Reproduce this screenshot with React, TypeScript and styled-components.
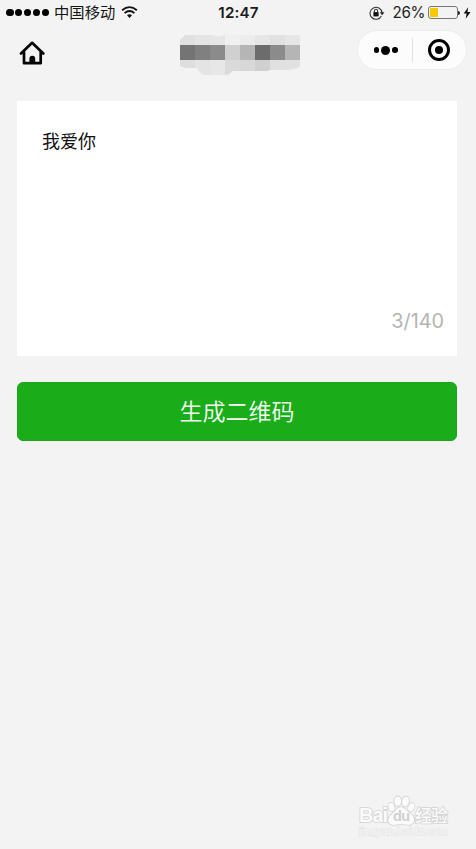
import React from 'react';
import styled, { createGlobalStyle } from 'styled-components';

const GlobalStyle = createGlobalStyle`
  *, *::before, *::after { box-sizing: border-box; }
  body {
    margin: 0;
    background: #f3f3f3;
    color: #000;
    font-family: Inter, "Noto Sans CJK SC", sans-serif;
  }
  svg { display: block; }
`;

const Screen = styled.div`
  display: flex;
  flex-direction: column;
  width: 476px;
  height: 849px;
  overflow: hidden;
  background: #f3f3f3;
`;

const StatusBar = styled.header`
  display: grid;
  grid-template-columns: 1fr 44px 1fr;
  align-items: center;
  height: 25px;
  padding: 0 5px 0 6px;
  font-size: 15px;
  line-height: 24px;
`;

const StatusGroup = styled.div<{ $end?: boolean }>`
  display: flex;
  align-items: center;
  justify-content: ${p => (p.$end ? 'flex-end' : 'flex-start')};
`;

const Signal = styled.div`
  display: flex;
  gap: 1.4px;
  margin-right: 5px;
`;

const Dot = styled.span<{ $size: number }>`
  width: ${p => p.$size}px;
  height: ${p => p.$size}px;
  border-radius: 50%;
  background: #000;
`;

const Carrier = styled.span`
  margin-right: 6px;
  padding-bottom: 3px;
  font-family: "Noto Sans CJK SC", sans-serif;
  font-size: 15.3px;
  line-height: 22px;
  color: #151515;
`;

const Time = styled.span`
  text-align: center;
  font-size: 15.2px;
  font-weight: 600;
  letter-spacing: 0.15px;
  white-space: nowrap;
  color: #1a1a1a;
`;

const Percent = styled.span`
  margin: 0 3px 0 8px;
  font-size: 15.2px;
  letter-spacing: -0.4px;
  color: #222;
`;

const Battery = styled.div`
  width: 30px;
  height: 13px;
  padding: 1px;
  border: 1px solid #777;
  border-radius: 3px;
`;

const Charge = styled.div`
  width: 7.5px;
  height: 9px;
  border-radius: 1px 0 0 1px;
  background: #fdc800;
`;

const BatteryTip = styled.span`
  width: 2px;
  height: 4px;
  margin-right: 3px;
  border-radius: 0 2px 2px 0;
  background: #222;
`;

const NavBar = styled.nav`
  display: grid;
  grid-template-columns: 1fr 120px 1fr;
  align-items: start;
  height: 76px;
  padding: 5px 9px 0 13px;
`;

const HomeButton = styled.button`
  width: 38px;
  height: 38px;
  margin-top: 4px;
  padding: 6px;
  border: 0;
  background: none;
`;

const TitleMosaic = styled.div`
  margin-top: 5px;
`;

const Capsule = styled.div`
  display: grid;
  grid-template-columns: 1fr 1px 1fr;
  align-items: center;
  justify-items: center;
  justify-self: end;
  width: 110px;
  height: 40px;
  border: 1px solid #ececec;
  border-radius: 20px;
  background: #fcfcfc;
`;

const More = styled.div`
  display: flex;
  align-items: center;
  gap: 2px;
  margin-left: 2px;
`;

const Divider = styled.span`
  width: 1px;
  height: 24px;
  background: #e1e1e1;
`;

const Target = styled.div`
  display: grid;
  place-items: center;
  width: 22px;
  height: 22px;
  border: 3px solid #000;
  border-radius: 50%;
`;

const Content = styled.main`
  display: flex;
  flex-direction: column;
  gap: 26px;
  padding: 0 19px 0 17px;
`;

const Editor = styled.section`
  display: flex;
  flex-direction: column;
  justify-content: space-between;
  height: 255px;
  padding: 26px 13px 21px 25px;
  background: #fff;
`;

const Message = styled.p`
  margin: 0;
  font-family: "Noto Sans CJK SC", sans-serif;
  font-size: 18px;
  line-height: 27px;
  color: #111;
`;

const Counter = styled.span`
  align-self: flex-end;
  font-size: 19.8px;
  line-height: 28px;
  color: #b4b4b4;
`;

const GenerateButton = styled.button`
  height: 59px;
  padding: 0 0 4px;
  border: 1px solid #1ca61b;
  border-radius: 6px;
  background: #1aad19;
  color: #f6fff6;
  font: 350 23px "Noto Sans CJK SC", sans-serif;
`;

const Watermark = styled.footer`
  align-self: flex-end;
  width: 94px;
  height: 47px;
  margin: auto 24px 10px 0;
`;

const mosaicRows = [
  { y: 0, h: 10, shades: ['#e0e0e0', '#e4e4e4', '#e6e6e6', '#f0f0f0', '#ececec', '#e6e6e6', '#e1e1e1', '#e6e6e6'] },
  { y: 10, h: 15, shades: ['#747474', '#808080', '#8b8b8b', '#d0d0d0', '#b5b5b5', '#6c6c6c', '#8b8b8b', '#b5b5b5'] },
  { y: 25, h: 15, shades: ['#dedede', '#e4e4e4', '#e7e7e7', '#dadada', '#d8d8d8', '#d0d0d0', '#e0e0e0', '#e1e1e1'] },
];

function Mosaic() {
  return (
    <svg width="120" height="40" viewBox="0 0 120 40" aria-hidden="true">
      <defs>
        <clipPath id="smudge">
          <path d="M0 5 5 0Q9-2 14 0H32Q38 3 44 0H120V31Q118 34 112 34L109 35H90L87 36H53L49 39 45 40H23Q18 36 17 33H5L0 31Z" />
        </clipPath>
      </defs>
      <g clipPath="url(#smudge)" shapeRendering="crispEdges">
        {mosaicRows.map(row => row.shades.map((shade, i) => (
          <rect key={`${row.y}-${i}`} x={i * 15} y={row.y} width="15" height={row.h} fill={shade} />
        )))}
      </g>
    </svg>
  );
}

function WifiIcon() {
  return (
    <svg width="17" height="13" viewBox="0 0 17 13" fill="none" stroke="#111" strokeWidth="1.8">
      <path d="M1.1 4.2Q8.5-1.9 15.9 4.2M3.6 7.2Q8.5 2.8 13.4 7.2" />
      <path d="M6 9.3Q8.5 7.3 11 9.3L8.5 12Z" fill="#111" stroke="none" />
    </svg>
  );
}

function RotationLockIcon() {
  return (
    <svg width="16" height="14" viewBox="0 0 16 14" fill="none" stroke="#333" strokeWidth="1.1">
      <path d="M12.4 10A6 6 0 1 1 13 6.6" />
      <path d="m10.7 6.2 4.8 0-2.4 3Z" fill="#222" stroke="none" />
      <rect x="4.4" y="6.1" width="5.2" height="4.3" fill="#111" stroke="none" />
      <path d="M5.4 6.3V4.9a1.6 1.6 0 0 1 3.2 0v1.4" />
    </svg>
  );
}

function HomeIcon() {
  return (
    <svg width="26" height="26" viewBox="0 0 26 26" fill="none" stroke="#050505" strokeWidth="2.7" strokeLinecap="round" strokeLinejoin="round">
      <path d="M2 13.5 13.1 2.8 24.3 13.5M5 12V23.2H21.7V12" />
      <path d="M10.4 23V18.6a2.9 2.9 0 0 1 5.8 0v4.4Z" fill="#050505" stroke="none" />
    </svg>
  );
}

function BaiduMark() {
  return (
    <svg width="94" height="47" viewBox="0 0 94 47" fontFamily='"Liberation Sans", "Noto Sans CJK SC", sans-serif'>
      <g fill="#fbfbfb" stroke="#d2d2d2" strokeWidth="1.6" paintOrder="stroke">
        <text x="1" y="30" fontSize="20" fontWeight="700" textLength="29">Bai</text>
        <ellipse cx="33.5" cy="15" rx="3" ry="4.2" transform="rotate(-15 33.5 15)" />
        <ellipse cx="39.8" cy="9.2" rx="3.4" ry="4.8" />
        <ellipse cx="47.5" cy="9.4" rx="3.4" ry="4.8" transform="rotate(12 47.5 9.4)" />
        <ellipse cx="53.3" cy="15.2" rx="3" ry="4.2" transform="rotate(20 53.3 15.2)" />
        <path d="M38 18Q43 12 48 18L55 24Q59 31 51 33 43 31.5 35 33 27 31 32 24Z" />
        <text x="35" y="29" fontSize="14.5" fontWeight="700" fill="#d0d0d0" stroke="none" textLength="17">du</text>
        <text x="57" y="30" fontSize="17" fontWeight="500" textLength="33">经验</text>
        <text x="1" y="43" fontSize="11" fill="#f8f8f8" stroke="#e2e2e2" strokeWidth="1" textLength="89">jingyan.baidu.com</text>
      </g>
    </svg>
  );
}

export default function App() {
  return (
    <>
      <GlobalStyle />
      <Screen>
        <StatusBar>
          <StatusGroup>
            <Signal>{[0, 1, 2, 3, 4].map(i => <Dot key={i} $size={7.5} />)}</Signal>
            <Carrier>中国移动</Carrier>
            <WifiIcon />
          </StatusGroup>
          <Time>12:47</Time>
          <StatusGroup $end>
            <RotationLockIcon />
            <Percent>26%</Percent>
            <Battery><Charge /></Battery>
            <BatteryTip />
            <svg width="8" height="12" viewBox="0 0 9 13"><path d="M5.8 0 .8 7H4L3 13 8.5 5.5H5Z" fill="#111" /></svg>
          </StatusGroup>
        </StatusBar>
        <NavBar>
          <HomeButton aria-label="首页"><HomeIcon /></HomeButton>
          <TitleMosaic><Mosaic /></TitleMosaic>
          <Capsule>
            <More><Dot $size={5.5} /><Dot $size={9} /><Dot $size={5.5} /></More>
            <Divider />
            <Target><Dot $size={8} /></Target>
          </Capsule>
        </NavBar>
        <Content>
          <Editor>
            <Message>我爱你</Message>
            <Counter>3/140</Counter>
          </Editor>
          <GenerateButton>生成二维码</GenerateButton>
        </Content>
        <Watermark><BaiduMark /></Watermark>
      </Screen>
    </>
  );
}
